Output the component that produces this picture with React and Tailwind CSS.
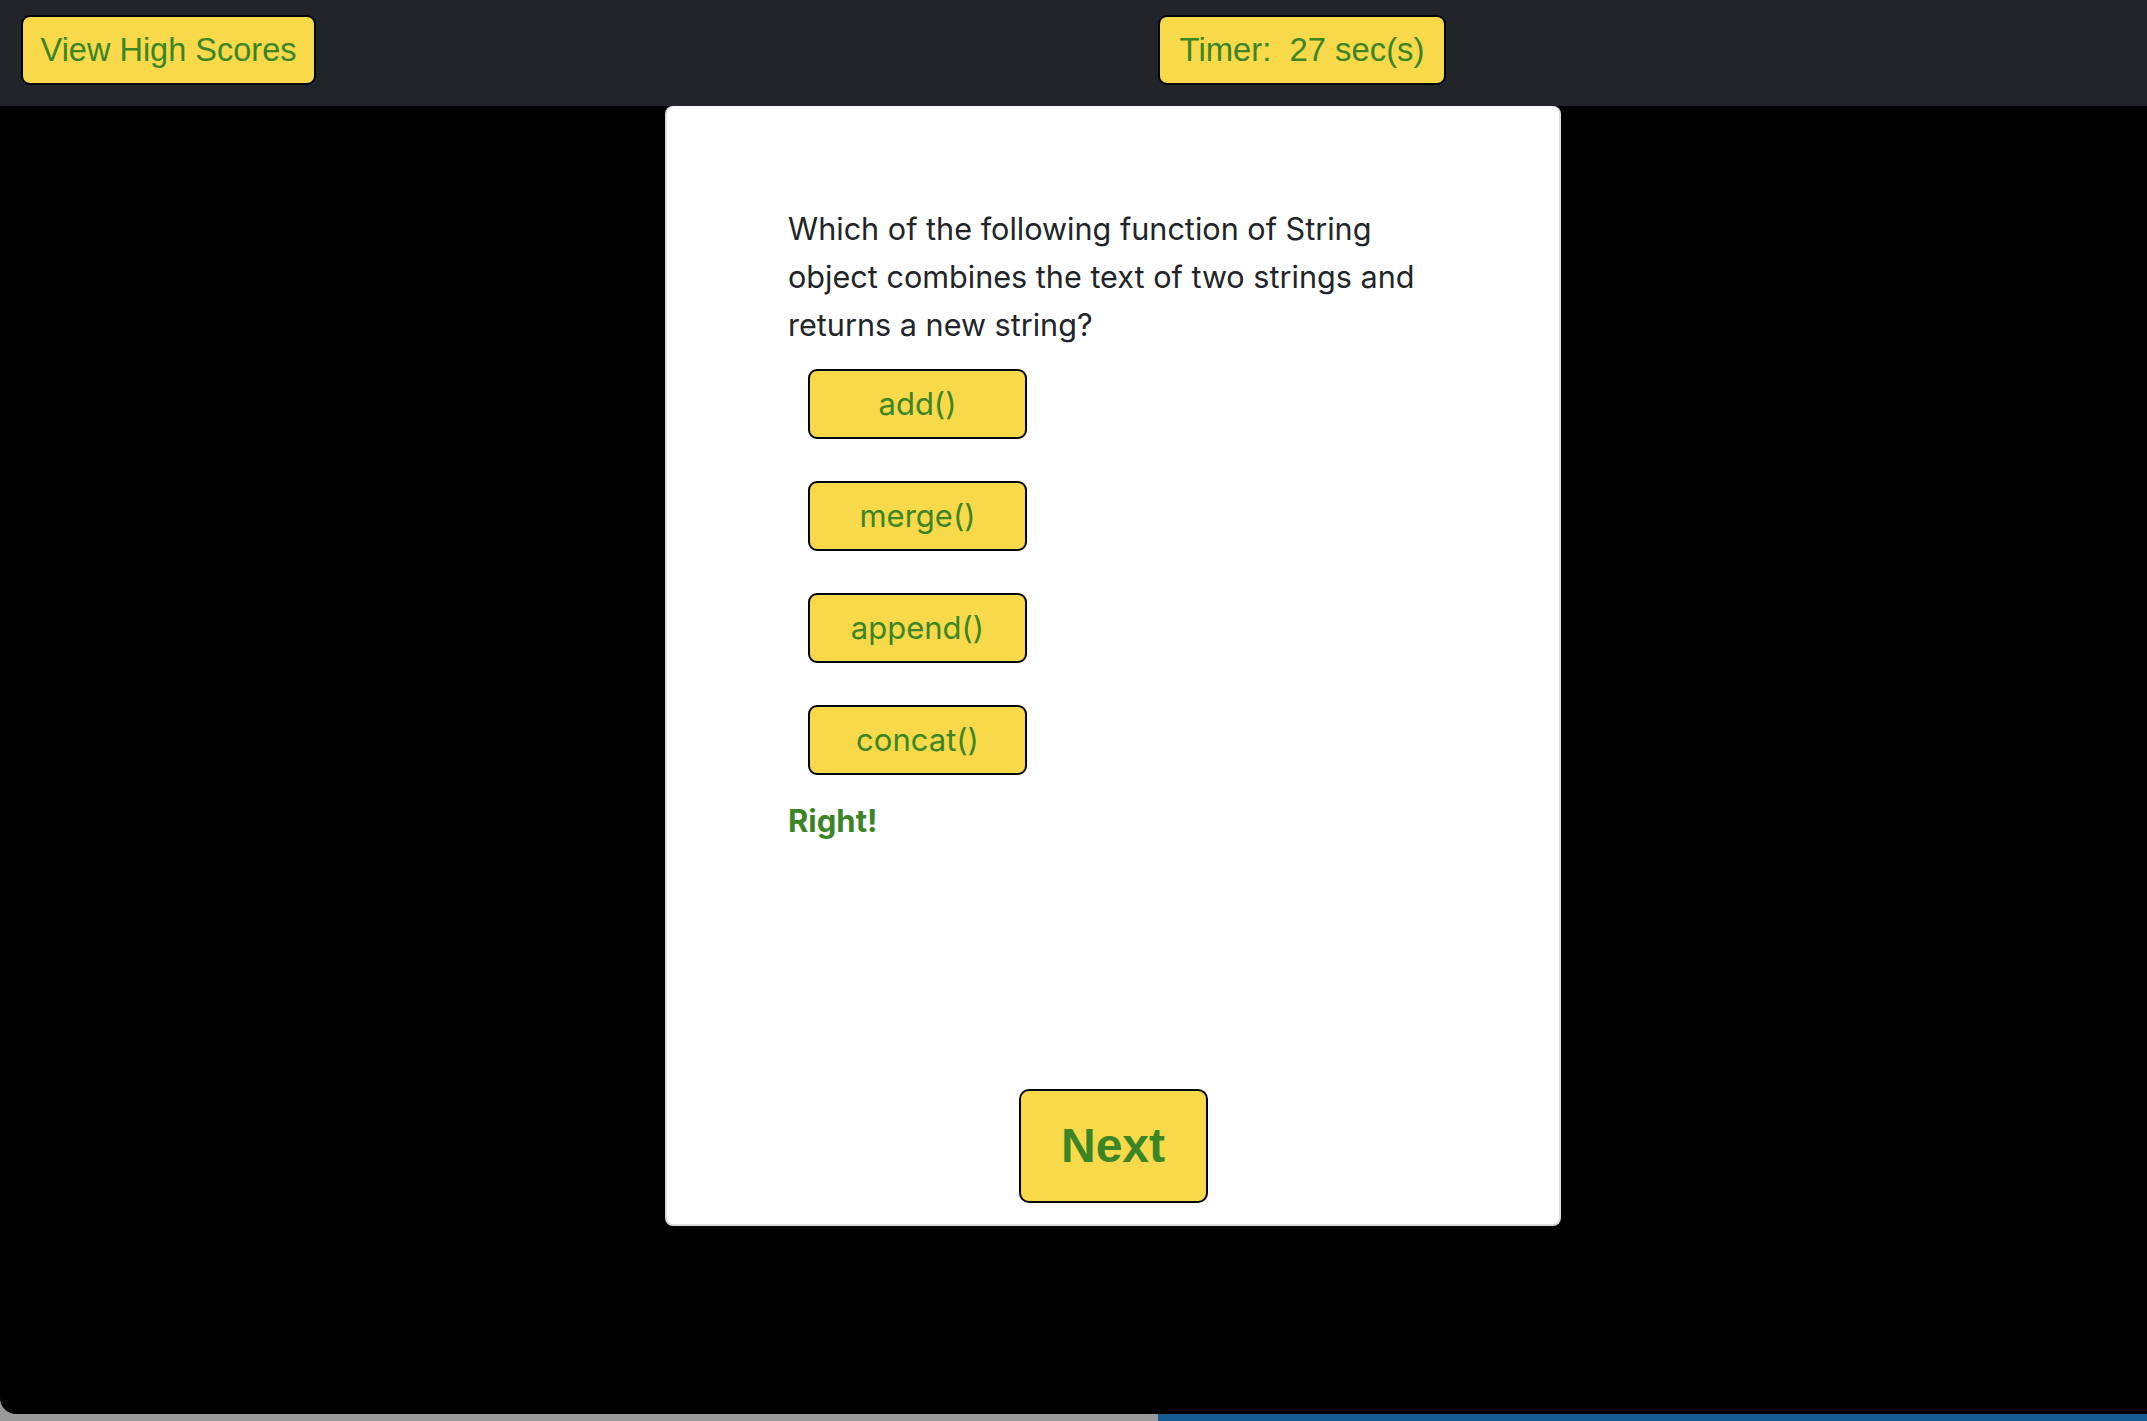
import React, { useState } from "react";

const answers = ["add()", "merge()", "append()", "concat()"];

function App() {
  const [picked, setPicked] = useState("concat()");

  return (
    <div className="w-[2147px] h-[1421px] bg-[#9a9a9a] flex flex-col overflow-hidden">
      <div className="flex-1 bg-black rounded-bl-[16px] flex flex-col">
        <header className="h-[106px] bg-[#212529] flex items-start pt-[15px] font-['Liberation_Sans',Arial,sans-serif]">
          <button className="ml-[21px] w-[295px] h-[70px] bg-[#f8d94a] border-2 border-black rounded-[9px] text-[32.5px] text-[#3b8526]">
            View High Scores
          </button>
          <div className="ml-[842px] w-[288px] h-[70px] bg-[#f8d94a] border-2 border-black rounded-[9px] text-[32.8px] text-[#3b8526] flex items-center justify-center whitespace-pre">
            Timer:  27 sec(s)
          </div>
        </header>

        <main className="ml-[665px] w-[896px] h-[1120px] bg-white border-2 border-t-0 border-[#dcdcdc] rounded-[8px] flex flex-col font-['Inter',sans-serif]">
          <div className="pl-[121px] pr-[100px] pt-[99px]">
            <p className="text-[30.6px] leading-[48px] text-[#212529] w-[660px]">
              Which of the following function of String object combines the text of two strings and returns a new string?
            </p>
            <div className="ml-[20px] mt-[20px] flex flex-col gap-[42px]">
              {answers.map((a) => (
                <button
                  key={a}
                  onClick={() => setPicked(a)}
                  className="w-[219px] h-[70px] bg-[#f8d94a] border-2 border-black rounded-[9px] text-[31px] text-[#3b8526]"
                >
                  {a}
                </button>
              ))}
            </div>
            {picked === "concat()" && (
              <p className="mt-[26px] text-[31px] leading-[40px] font-bold text-[#3b8526]">Right!</p>
            )}
          </div>
          <div className="mt-auto mb-[21px] flex justify-center">
            <button className="w-[189px] h-[114px] bg-[#f8d94a] border-2 border-black rounded-[10px] text-[48px] font-bold text-[#3b8526] font-['Liberation_Sans',Arial,sans-serif]">
              Next
            </button>
          </div>
        </main>
      </div>
      <div className="h-[7px] flex">
        <div className="w-[1158px] bg-[#9a9a9a]"></div>
        <div className="flex-1 bg-[#155c92]"></div>
      </div>
    </div>
  );
}

export default App;
